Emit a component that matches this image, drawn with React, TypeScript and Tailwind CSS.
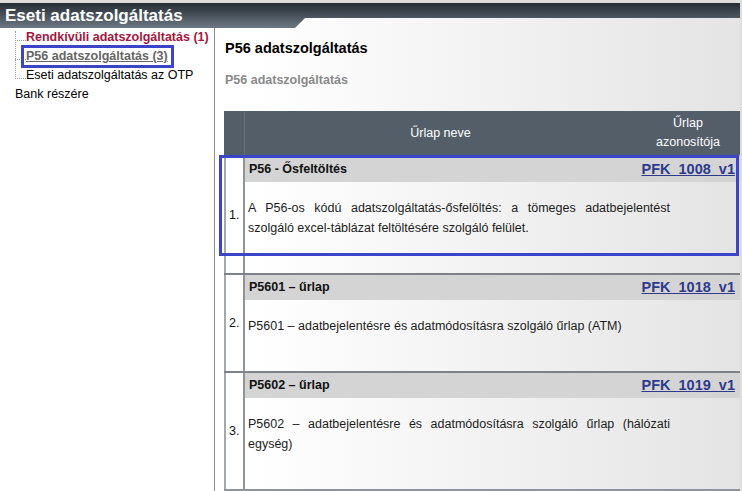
import React from 'react';

// Űrlapok listája
const rows = [
  {
    n: '1.',
    title: 'P56 - Ősfeltöltés',
    code: 'PFK_1008_v1',
    desc: 'A P56-os kódú adatszolgáltatás-ősfelöltés: a tömeges adatbejelentést szolgáló excel-táblázat feltöltésére szolgáló felület.',
    marked: true,
  },
  {
    n: '2.',
    title: 'P5601 – űrlap',
    code: 'PFK_1018_v1',
    desc: 'P5601 – adatbejelentésre és adatmódosításra szolgáló űrlap (ATM)',
  },
  {
    n: '3.',
    title: 'P5602 – űrlap',
    code: 'PFK_1019_v1',
    desc: 'P5602 – adatbejelentésre és adatmódosításra szolgáló űrlap (hálózati egység)',
  },
];

function Sidebar() {
  return (
    <div className="w-[215px] shrink-0 bg-white border-r border-[#8c8c8c] text-[12.5px] leading-[19px]">
      <ul className="relative pl-[15px]">
        {/* fa vonal */}
        <span className="absolute left-[15px] top-[3px] h-[48px] border-l border-dotted border-[#9a9a9a]" />
        <li>
          <span className="inline-block w-[11px] h-0 border-b border-dotted border-[#9a9a9a]" />
          <a className="font-bold text-[#a3173d]">Rendkívüli adatszolgáltatás (1)</a>
        </li>
        <li>
          <span className="inline-block w-[11px] h-0 border-b border-dotted border-[#9a9a9a]" />
          <span className="relative inline-block leading-[19px]">
            <a className="font-bold text-[#666] underline">P56 adatszolgáltatás (3)</a>
            <span className="absolute -left-[5px] -right-[6px] -top-[2px] -bottom-[2px] border-[3px] border-[#3c45c9]" />
          </span>
        </li>
        <li className="text-black">
          <span className="inline-block w-[11px] h-0 border-b border-dotted border-[#9a9a9a]" />
          Eseti adatszolgáltatás az OTP Bank részére
        </li>
      </ul>
    </div>
  );
}

function FormTable() {
  return (
    <div className="w-[516px] text-[12.5px]">
      {/* fejléc */}
      <div className="flex h-[44px] bg-[#545e68] text-white">
        <div className="w-[21px] border-r border-[#6a737c]" />
        <div className="flex-1 flex items-center justify-center">Űrlap neve</div>
        <div className="w-[104px] flex flex-col items-center justify-center leading-[19px]">
          <span>Űrlap</span>
          <span>azonosítója</span>
        </div>
      </div>

      {rows.map((r, i) => (
        <div
          key={r.code}
          className={`relative flex border-t-2 ${i === 0 ? 'border-[#b9bdc2]' : 'border-[#7d828a]'} ${i === rows.length - 1 ? 'border-b-2 border-b-[#8e949a]' : ''}`}
        >
          <div className="w-[21px] shrink-0 flex items-center pl-[3px] border-l-2 border-r-2 border-l-[#a4a9ae] border-r-[#8e949a] text-[#111]">
            {r.n}
          </div>
          <div className="flex-1 flex flex-col">
            <div className="h-[25px] bg-[#d4d4d4] flex items-center justify-between pl-[4px] pr-[5px]">
              <span className="font-bold text-[#111]">{r.title}</span>
              <a className="font-bold text-[14.5px] text-[#2e3a8c] underline">{r.code}</a>
            </div>
            <p className="mt-[16px] pb-[35px] pl-[3px] max-w-[425px] text-justify leading-[20px] text-[#1c1c1c]">
              {r.desc}
            </p>
          </div>
          {r.marked && (
            <span className="absolute -left-[5px] right-[1px] -top-[2px] h-[101px] border-[3px] border-[#3c45c9]" />
          )}
        </div>
      ))}
    </div>
  );
}

export default function App() {
  return (
    <div className="w-[742px] h-[491px] overflow-hidden bg-[#dedede] pt-[3px] pr-[2px] font-['Liberation_Sans',Arial,sans-serif]">
      <div className="h-full flex flex-col bg-[linear-gradient(to_right,#ffffff_35%,#e4e4e4)]">
        {/* felső sáv */}
        <div className="flex h-[25px] shrink-0">
          <div className="w-[305px] h-[25px] flex items-center pl-[5px] text-white font-bold text-[17px] bg-gradient-to-b from-[#262d35] to-[#6e7984] [clip-path:polygon(0_0,100%_0,100%_60%,calc(100%_-_10px)_100%,0_100%)]">
            Eseti adatszolgáltatás
          </div>
          <div className="flex-1 h-[15px] bg-gradient-to-b from-[#262d35] to-[#4e5862]" />
        </div>

        <div className="flex flex-1 min-h-0">
          <Sidebar />
          <div className="flex-1 pl-[9px]">
            <h1 className="mt-[11px] pl-[1px] leading-[18px] font-bold text-[14.5px] text-black">P56 adatszolgáltatás</h1>
            <h2 className="mt-[15px] pl-[1px] leading-[16px] font-bold text-[12.5px] text-[#8a8a8a]">P56 adatszolgáltatás</h2>
            <div className="mt-[23px]">
              <FormTable />
            </div>
          </div>
        </div>
      </div>
    </div>
  );
}
